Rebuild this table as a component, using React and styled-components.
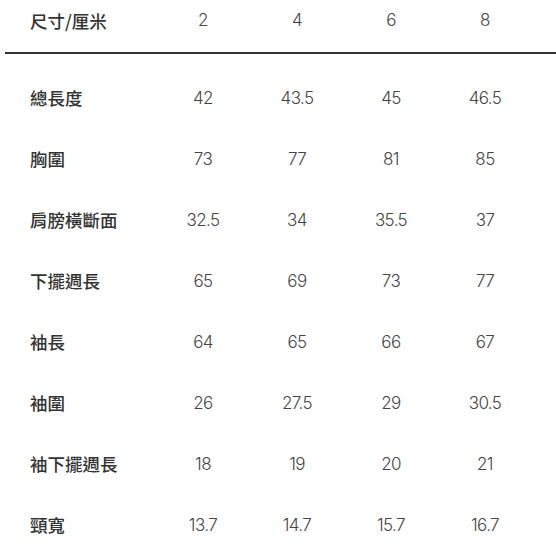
import React from "react";
import styled, { createGlobalStyle } from "styled-components";

const GlobalStyle = createGlobalStyle`
  html, body {
    margin: 0;
    padding: 0;
    background: #ffffff;
  }
`;

const Table = styled.div`
  width: 556px;
  display: flex;
  flex-direction: column;
  color: #333333;
`;

const Row = styled.div`
  display: grid;
  grid-template-columns: 126px repeat(4, 94px);
  align-items: center;
  height: ${props => props.$height}px;
  padding-left: 30px;
`;

const HeadRow = styled(Row)`
  margin-left: 5px;
  padding-left: 25px;
  padding-bottom: 12px;
  border-bottom: 2px solid #333333;
  margin-bottom: 13px;
`;

const Label = styled.div`
  font-family: "Noto Sans CJK TC", "Noto Sans CJK SC", sans-serif;
  font-size: 17.5px;
  font-weight: 500;
  color: #333333;
  white-space: nowrap;
`;

const Value = styled.div`
  font-family: "Inter", "Lato", sans-serif;
  font-size: 17px;
  font-weight: 300;
  color: #444444;
  text-align: center;
  letter-spacing: -0.6px;
`;

const sizes = ["2", "4", "6", "8"];

const rows = [
  { label: "總長度", values: ["42", "43.5", "45", "46.5"] },
  { label: "胸圍", values: ["73", "77", "81", "85"] },
  { label: "肩膀橫斷面", values: ["32.5", "34", "35.5", "37"] },
  { label: "下擺週長", values: ["65", "69", "73", "77"] },
  { label: "袖長", values: ["64", "65", "66", "67"] },
  { label: "袖圍", values: ["26", "27.5", "29", "30.5"] },
  { label: "袖下擺週長", values: ["18", "19", "20", "21"] },
  { label: "頸寬", values: ["13.7", "14.7", "15.7", "16.7"] },
];

const App = () => {
  return (
    <>
      <GlobalStyle />
      <Table>
        <HeadRow $height={40}>
          <Label>尺寸/厘米</Label>
          {sizes.map(size => (
            <Value key={size}>{size}</Value>
          ))}
        </HeadRow>
        {rows.map(row => (
          <Row key={row.label} $height={61}>
            <Label>{row.label}</Label>
            {row.values.map((value, i) => (
              <Value key={i}>{value}</Value>
            ))}
          </Row>
        ))}
      </Table>
    </>
  );
};

export default App;
